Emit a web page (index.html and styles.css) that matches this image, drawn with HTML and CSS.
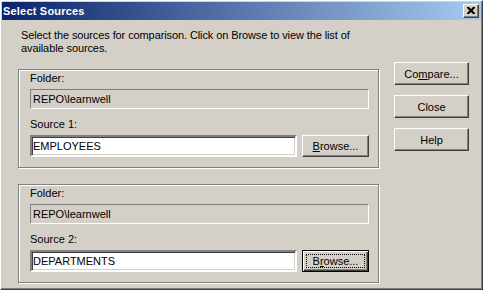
FILE: index.html
```html
<!DOCTYPE html>
<html lang="en">
<head>
    <meta charset="UTF-8">
    <meta name="viewport" content="width=device-width, initial-scale=1.0">
    <title>Select Sources</title>
    <link rel="stylesheet" href="styles.css">
</head>
<body>
    <div class="window">
        <div class="titlebar">
            <span class="title">Select Sources</span>
            <button class="caption-btn" aria-label="Close">
                <svg width="8" height="7" viewBox="0 0 8 7">
                    <path d="M0 0h2l2 2 2-2h2v1l-2.5 2.5L8 6v1H6L4 5 2 7H0V6l2.5-2.5L0 1z" fill="#000"/>
                </svg>
            </button>
        </div>
        <div class="client">
            <div class="main">
                <p class="intro">Select the sources for comparison. Click on Browse to view the list of available sources.</p>

                <div class="group">
                    <label class="label" for="folder1">Folder:</label>
                    <input class="field static" id="folder1" type="text" value="REPO\learnwell" readonly>
                    <label class="label" for="source1">Source 1:</label>
                    <div class="row">
                        <input class="field edit" id="source1" type="text" value="EMPLOYEES">
                        <button class="btn browse"><u>B</u>rowse...</button>
                    </div>
                </div>

                <div class="group second">
                    <label class="label" for="folder2">Folder:</label>
                    <input class="field static" id="folder2" type="text" value="REPO\learnwell" readonly>
                    <label class="label" for="source2">Source 2:</label>
                    <div class="row">
                        <input class="field edit" id="source2" type="text" value="DEPARTMENTS">
                        <button class="btn browse default">B<u>r</u>owse...</button>
                    </div>
                </div>
            </div>

            <div class="actions">
                <button class="btn">Co<u>m</u>pare...</button>
                <button class="btn">Close</button>
                <button class="btn">Help</button>
            </div>
        </div>
    </div>
</body>
</html>
```

FILE: styles.css
```css
* {
    box-sizing: border-box;
}

body {
    margin: 0;
    background-color: #d4d0c8;
    font-family: "Liberation Sans", Arial, sans-serif;
    font-size: 11px;
    color: #000;
}

.window {
    width: 483px;
    height: 290px;
    padding: 1px;
    border: 1px solid;
    border-color: #fff #404040 #404040 #fff;
    box-shadow: inset -1px -1px #808080;
    background-color: #d4d0c8;
}

.titlebar {
    display: flex;
    align-items: center;
    justify-content: space-between;
    height: 18px;
    padding: 0 2px 0 1px;
    background: linear-gradient(to right, #0a246a, #a6caf0);
    color: #fff;
    font-weight: bold;
    letter-spacing: 0.2px;
}

.caption-btn {
    display: flex;
    align-items: center;
    justify-content: center;
    width: 16px;
    height: 14px;
    padding: 0 0 1px 0;
    border: 1px solid;
    border-color: #fff #404040 #404040 #fff;
    box-shadow: inset -1px -1px #808080;
    background-color: #d4d0c8;
}

.client {
    display: flex;
    padding: 9px 0 0 16px;
}

.main {
    width: 361px;
}

.intro {
    margin: 0 0 14px 3px;
    line-height: 13px;
    letter-spacing: -0.1px;
}

.group {
    padding: 2px 9px 10px 11px;
    border: 1px solid #808080;
    box-shadow: inset 1px 1px #fff, 1px 1px #fff;
}

.group.second {
    margin-top: 16px;
}

.label {
    display: block;
    line-height: 13px;
    margin-bottom: 4px;
}

.field {
    display: block;
    width: 100%;
    margin: 0;
    font-family: inherit;
    font-size: 11px;
    color: #000;
    outline: none;
}

.static {
    height: 20px;
    margin-bottom: 9px;
    padding: 0 2px;
    border: 1px solid;
    border-color: #808080 #fff #fff #808080;
    background-color: #d4d0c8;
}

.row {
    display: flex;
    gap: 5px;
}

.edit {
    flex: 1;
    height: 22px;
    padding: 0 1px;
    border: 2px solid;
    border-color: #808080 #fff #fff #808080;
    box-shadow: inset 1px 1px #404040, inset -1px -1px #d4d0c8;
    background-color: #fff;
}

.btn {
    width: 75px;
    height: 23px;
    padding: 0;
    border: 1px solid;
    border-color: #fff #404040 #404040 #fff;
    box-shadow: inset -1px -1px #808080;
    background-color: #d4d0c8;
    font-family: inherit;
    font-size: 11px;
    color: #000;
}

.btn u {
    text-underline-offset: 1px;
}

.browse {
    width: 67px;
    height: 22px;
    flex-shrink: 0;
}

.btn.default {
    border-color: #000;
    box-shadow: inset 1px 1px #fff, inset -1px -1px #404040, inset -2px -2px #808080;
    outline: 1px dotted #000;
    outline-offset: -5px;
}

.actions {
    display: flex;
    flex-direction: column;
    gap: 10px;
    margin: 33px 0 0 15px;
}
```
